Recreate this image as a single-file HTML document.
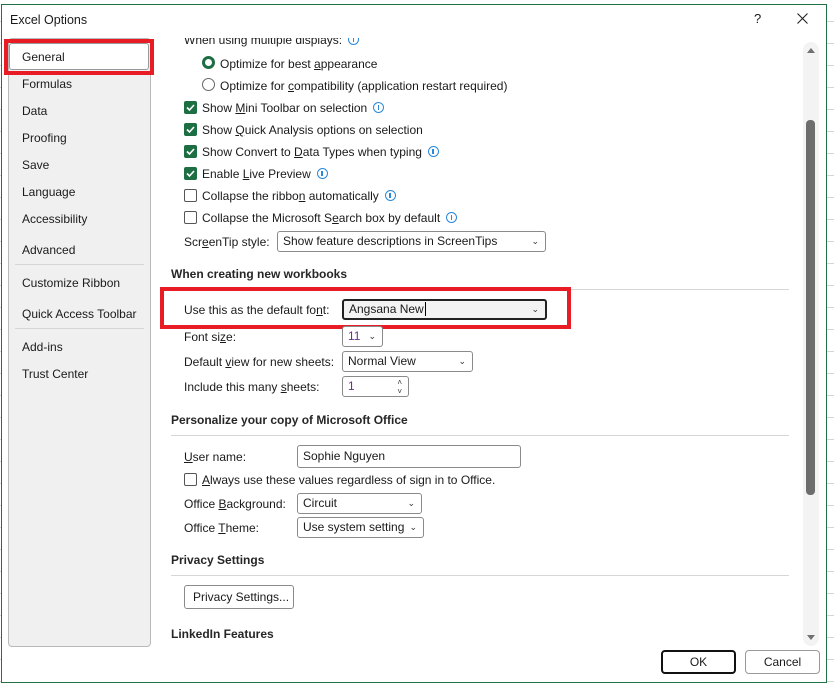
<!DOCTYPE html>
<html><head><meta charset="utf-8"><style>
*{margin:0;padding:0;box-sizing:border-box}
body{width:834px;height:688px;overflow:hidden;background:#fff;font-family:"Liberation Sans",sans-serif;font-size:12px;color:#1a1a1a;position:relative}
.a{position:absolute;white-space:nowrap;line-height:16px}
.grid{position:absolute;inset:0;background:
repeating-linear-gradient(to bottom,transparent 0 21px,#d4d4d4 21px 22px),#fff}
.dlg{position:absolute;left:1px;top:4px;width:826px;height:679px;background:#fff;border:1px solid #217346}
.nav{position:absolute;left:8px;top:38px;width:143px;height:609px;background:#f0f0f0;border:1px solid #b9b9b9;border-radius:4px}
.cb{position:absolute;width:13px;height:13px;border-radius:2px;background:#1e6e43}
.cb svg{position:absolute;left:2px;top:2px}
.ub{position:absolute;width:13px;height:13px;border-radius:2px;border:1px solid #555;background:#fff}
.info{display:inline-block;position:relative;vertical-align:-1px;margin-left:6px;width:11px;height:11px;border:1.3px solid #2b88d8;border-radius:50%}
.info:after{content:"";position:absolute;left:3.5px;top:1.5px;width:1.5px;height:5px;background:#2b88d8}
.box{position:absolute;border:1px solid #8a8a8a;border-radius:3px;background:#fff;height:21px;padding-left:5px;line-height:19px}
.box .v{position:absolute;right:6px;top:0;font-size:9px;color:#333}
.hr{position:absolute;height:1px;background:#d6d6d6}
.h{font-weight:bold;color:#262626}
u{text-decoration:underline}
</style></head><body>
<div class="grid"></div>
<div class="dlg"></div>
<div class="a" style="left:10px;top:12px;font-size:12.5px">Excel Options</div>
<div class="a" style="left:754px;top:11px;font-size:13px">?</div>
<svg style="position:absolute;left:797px;top:13px" width="11" height="11" viewBox="0 0 11 11"><path d="M0.5 0.5 L10.5 10.5 M10.5 0.5 L0.5 10.5" stroke="#222" stroke-width="1.1"/></svg>
<div class="nav"></div>
<div style="position:absolute;left:4px;top:39px;width:150px;height:36px;border:4px solid #e81c24"></div>
<div style="position:absolute;left:9px;top:43px;width:140px;height:27px;background:#fff;border:1px solid #999;border-radius:3px"></div>
<div class="a" style="left:22px;top:49px">General</div>
<div class="a" style="left:22px;top:76px">Formulas</div>
<div class="a" style="left:22px;top:103px">Data</div>
<div class="a" style="left:22px;top:130px">Proofing</div>
<div class="a" style="left:22px;top:157px">Save</div>
<div class="a" style="left:22px;top:184px">Language</div>
<div class="a" style="left:22px;top:211px">Accessibility</div>
<div class="a" style="left:22px;top:242px">Advanced</div>
<div class="hr" style="left:15px;top:264px;width:129px"></div>
<div class="a" style="left:22px;top:275px">Customize Ribbon</div>
<div class="a" style="left:22px;top:306px">Quick Access Toolbar</div>
<div class="hr" style="left:15px;top:328px;width:129px"></div>
<div class="a" style="left:22px;top:339px">Add-ins</div>
<div class="a" style="left:22px;top:366px">Trust Center</div>

<div class="a" style="left:184px;top:38px;height:10px;overflow:hidden"><div style="margin-top:-6px">When using multiple displays:<span class="info"></span></div></div>
<div style="position:absolute;left:202px;top:56px;width:13px;height:13px;border-radius:50%;border:3.5px solid #1e6e43;background:#fff"></div>
<div class="a" style="left:220px;top:56px">Optimize for best <u>a</u>ppearance</div>
<div style="position:absolute;left:202px;top:78px;width:13px;height:13px;border-radius:50%;border:1px solid #666;background:#fff"></div>
<div class="a" style="left:220px;top:78px">Optimize for <u>c</u>ompatibility (application restart required)</div>

<div class="cb" style="left:184px;top:101px"><svg width="9" height="9" viewBox="0 0 9 9"><path d="M1 4.5 L3.5 7 L8 2" stroke="#fff" stroke-width="1.6" fill="none"/></svg></div>
<div class="a" style="left:202px;top:100px">Show <u>M</u>ini Toolbar on selection<span class="info"></span></div>
<div class="cb" style="left:184px;top:123px"><svg width="9" height="9" viewBox="0 0 9 9"><path d="M1 4.5 L3.5 7 L8 2" stroke="#fff" stroke-width="1.6" fill="none"/></svg></div>
<div class="a" style="left:202px;top:122px">Show <u>Q</u>uick Analysis options on selection</div>
<div class="cb" style="left:184px;top:145px"><svg width="9" height="9" viewBox="0 0 9 9"><path d="M1 4.5 L3.5 7 L8 2" stroke="#fff" stroke-width="1.6" fill="none"/></svg></div>
<div class="a" style="left:202px;top:144px">Show Convert to <u>D</u>ata Types when typing<span class="info"></span></div>
<div class="cb" style="left:184px;top:167px"><svg width="9" height="9" viewBox="0 0 9 9"><path d="M1 4.5 L3.5 7 L8 2" stroke="#fff" stroke-width="1.6" fill="none"/></svg></div>
<div class="a" style="left:202px;top:166px">Enable <u>L</u>ive Preview<span class="info"></span></div>
<div class="ub" style="left:184px;top:189px"></div>
<div class="a" style="left:202px;top:188px">Collapse the ribbo<u>n</u> automatically<span class="info"></span></div>
<div class="ub" style="left:184px;top:211px"></div>
<div class="a" style="left:202px;top:210px">Collapse the Microsoft S<u>e</u>arch box by default<span class="info"></span></div>
<div class="a" style="left:184px;top:234px">Scr<u>e</u>enTip style:</div>
<div class="box" style="left:277px;top:231px;width:269px">Show feature descriptions in ScreenTips<span class="v">⌄</span></div>

<div class="a h" style="left:171px;top:266px">When creating new workbooks</div>
<div class="hr" style="left:171px;top:289px;width:618px"></div>
<div style="position:absolute;left:160px;top:287px;width:411px;height:42px;border:4px solid #e81c24"></div>
<div class="a" style="left:184px;top:302px">Use this as the default fo<u>n</u>t:</div>
<div class="box" style="left:342px;top:299px;width:205px;border:2px solid #222;background:#f3f3f3;line-height:17px">Angsana New<span style="border-left:1px solid #000;margin-left:1px"></span><span class="v">⌄</span></div>
<div class="a" style="left:184px;top:329px">Font si<u>z</u>e:</div>
<div class="box" style="left:342px;top:326px;width:41px;color:#6a2f8f">11<span class="v">⌄</span></div>
<div class="a" style="left:184px;top:354px">Default <u>v</u>iew for new sheets:</div>
<div class="box" style="left:342px;top:351px;width:131px">Normal View<span class="v">⌄</span></div>
<div class="a" style="left:184px;top:379px">Include this many <u>s</u>heets:</div>
<div class="box" style="left:342px;top:376px;width:67px;color:#6a2f8f">1<span class="v" style="font-size:8px;line-height:9px;top:1px">˄<br>˅</span></div>

<div class="a h" style="left:171px;top:412px">Personalize your copy of Microsoft Office</div>
<div class="hr" style="left:171px;top:435px;width:618px"></div>
<div class="a" style="left:184px;top:449px"><u>U</u>ser name:</div>
<div class="box" style="left:297px;top:445px;width:224px;height:23px;line-height:21px">Sophie Nguyen</div>
<div class="ub" style="left:184px;top:473px"></div>
<div class="a" style="left:202px;top:472px"><u>A</u>lways use these values regardless of sign in to Office.</div>
<div class="a" style="left:184px;top:496px">Office <u>B</u>ackground:</div>
<div class="box" style="left:297px;top:493px;width:125px">Circuit<span class="v">⌄</span></div>
<div class="a" style="left:184px;top:520px">Office <u>T</u>heme:</div>
<div class="box" style="left:297px;top:517px;width:127px">Use system setting<span class="v">⌄</span></div>

<div class="a h" style="left:171px;top:552px">Privacy Settings</div>
<div class="hr" style="left:171px;top:575px;width:618px"></div>
<div class="box" style="left:184px;top:585px;width:110px;height:24px;line-height:22px;padding-left:8px">Privacy Settings...</div>
<div class="a h" style="left:171px;top:626px">LinkedIn Features</div>

<div style="position:absolute;left:803px;top:42px;width:16px;height:604px;background:#f3f3f3;border-radius:8px"></div>
<div style="position:absolute;left:807px;top:48px;width:0;height:0;border-left:4px solid transparent;border-right:4px solid transparent;border-bottom:5px solid #707070"></div>
<div style="position:absolute;left:806px;top:120px;width:9px;height:375px;background:#6d6d6d;border-radius:4px"></div>
<div style="position:absolute;left:807px;top:635px;width:0;height:0;border-left:4px solid transparent;border-right:4px solid transparent;border-top:5px solid #707070"></div>

<div style="position:absolute;left:661px;top:650px;width:75px;height:24px;border:2px solid #111;border-radius:4px;text-align:center;line-height:20px">OK</div>
<div style="position:absolute;left:745px;top:650px;width:75px;height:24px;border:1px solid #999;border-radius:4px;text-align:center;line-height:22px">Cancel</div>
</body></html>
